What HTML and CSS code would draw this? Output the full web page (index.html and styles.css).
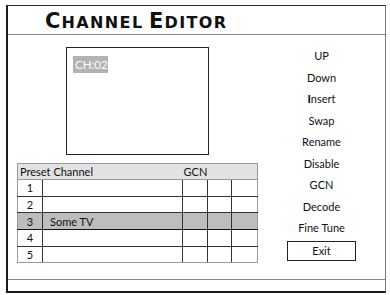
FILE: index.html
```html
<!DOCTYPE html>
<html>
<head>
<meta charset="utf-8">
<link rel="stylesheet" href="styles.css">
</head>
<body>
<div class="frame">
  <div class="titlebar"><h1 class="title"><span class="cap">C</span><span class="sc">HANNEL</span> <span class="cap">E</span><span class="sc">DITOR</span></h1></div>
  <div class="main">
    <div class="left">
      <div class="preview"><span class="chlabel">CH:02</span></div>
      <table class="chtable">
        <colgroup>
          <col class="c-num"><col class="c-name"><col class="c-g1"><col class="c-g2"><col class="c-g3">
        </colgroup>
        <tr class="head"><td colspan="2" class="hname">Preset Channel</td><td colspan="3" class="hgcn">GCN</td></tr>
        <tr><td class="num">1</td><td></td><td></td><td></td><td></td></tr>
        <tr><td class="num">2</td><td></td><td></td><td></td><td></td></tr>
        <tr class="sel"><td class="num">3</td><td class="name">Some TV</td><td></td><td></td><td></td></tr>
        <tr><td class="num">4</td><td></td><td></td><td></td><td></td></tr>
        <tr><td class="num">5</td><td></td><td></td><td></td><td></td></tr>
      </table>
    </div>
    <ul class="menu">
      <li>UP</li>
      <li>Down</li>
      <li><b>I</b>nsert</li>
      <li>Swap</li>
      <li>Rename</li>
      <li>Disable</li>
      <li>GCN</li>
      <li>Decode</li>
      <li>Fine Tune</li>
      <li class="exit"><span>Exit</span></li>
    </ul>
  </div>
  <div class="footer"></div>
</div>
</body>
</html>
```
FILE: styles.css
```css
html, body {
  margin: 0;
  padding: 0;
  background: #fff;
}
body {
  font-family: "Lato", "DejaVu Sans", sans-serif;
  color: #111;
}
.frame {
  margin: 5px 0 0 6px;
  width: 377px;
  height: 285px;
  border-left: 2px solid #1a1a1a;
  border-top: 1px solid #2a2a2a;
  border-right: 1px solid #777;
  border-bottom: 2px solid #1a1a1a;
  display: flex;
  flex-direction: column;
}
.titlebar {
  height: 28px;
  border-bottom: 1px solid #888;
  flex: none;
}
.title {
  margin: 0 0 0 37px;
  font-family: "DejaVu Sans", sans-serif;
  font-weight: 700;
  font-size: 16px;
  line-height: 30px;
  color: #111;
  white-space: nowrap;
}
.title .cap {
  font-size: 21px;
  letter-spacing: 1px;
}
.title .sc {
  font-size: 16px;
  letter-spacing: 1.4px;
}
.main {
  flex: 1;
  display: flex;
  border-bottom: 1px solid #888;
}
.left {
  width: 250px;
  flex: none;
}
.preview {
  margin: 12px 0 0 58px;
  width: 135px;
  height: 101px;
  border: 1px solid #222;
  padding: 5px 0 0 6px;
}
.chlabel {
  display: inline-block;
  background: #b3b3b3;
  color: #fff;
  font-size: 11.5px;
  line-height: 17px;
  padding: 0 2px;
  width: 31px;
}
.chtable {
  margin: 8px 0 0 9px;
  border-collapse: collapse;
  width: 240px;
  table-layout: fixed;
  font-size: 11px;
}
.c-num { width: 25px; }
.c-name { width: 140px; }
.c-g1 { width: 25px; }
.c-g2 { width: 24px; }
.c-g3 { width: 26px; }
.chtable td {
  height: 15.7px;
  padding: 0;
  border: 1px solid #333;
  line-height: 15px;
}
.chtable tr.head td {
  background: #e2e2e2;
  border-top: 1px solid #999;
  border-bottom: 1px solid #999;
  border-left: none;
  border-right: none;
  height: 15px;
}
.chtable tr.head td.hname { border-left: 1px solid #999; padding-left: 2px; }
.chtable tr.head td.hgcn { border-right: 1px solid #999; padding-left: 1px; }
.chtable td.num {
  text-align: center;
  border-left: 1px solid #999;
}
.chtable tr td:last-child { border-right: 1px solid #999; }
.chtable tr:last-child td { border-bottom: 1px solid #999; }
.chtable tr.sel td {
  background: #bdbdbd;
  border-top: 1px solid #111;
  border-bottom: 1px solid #111;
}
.chtable td.name { padding-left: 7px; }
.menu {
  list-style: none;
  margin: 0;
  padding: 10px 0 0 0;
  flex: 1;
  display: flex;
  flex-direction: column;
  align-items: center;
  font-size: 11px;
}
.menu li {
  height: 21.5px;
  line-height: 21.5px;
  text-align: center;
}
.menu b { font-weight: 900; }
.menu li.exit {
  margin-top: 2px;
}
.menu li.exit span {
  display: block;
  width: 67px;
  height: 18px;
  line-height: 18px;
  border: 1px solid #222;
  text-align: center;
}
.footer {
  height: 11px;
  flex: none;
}
```
